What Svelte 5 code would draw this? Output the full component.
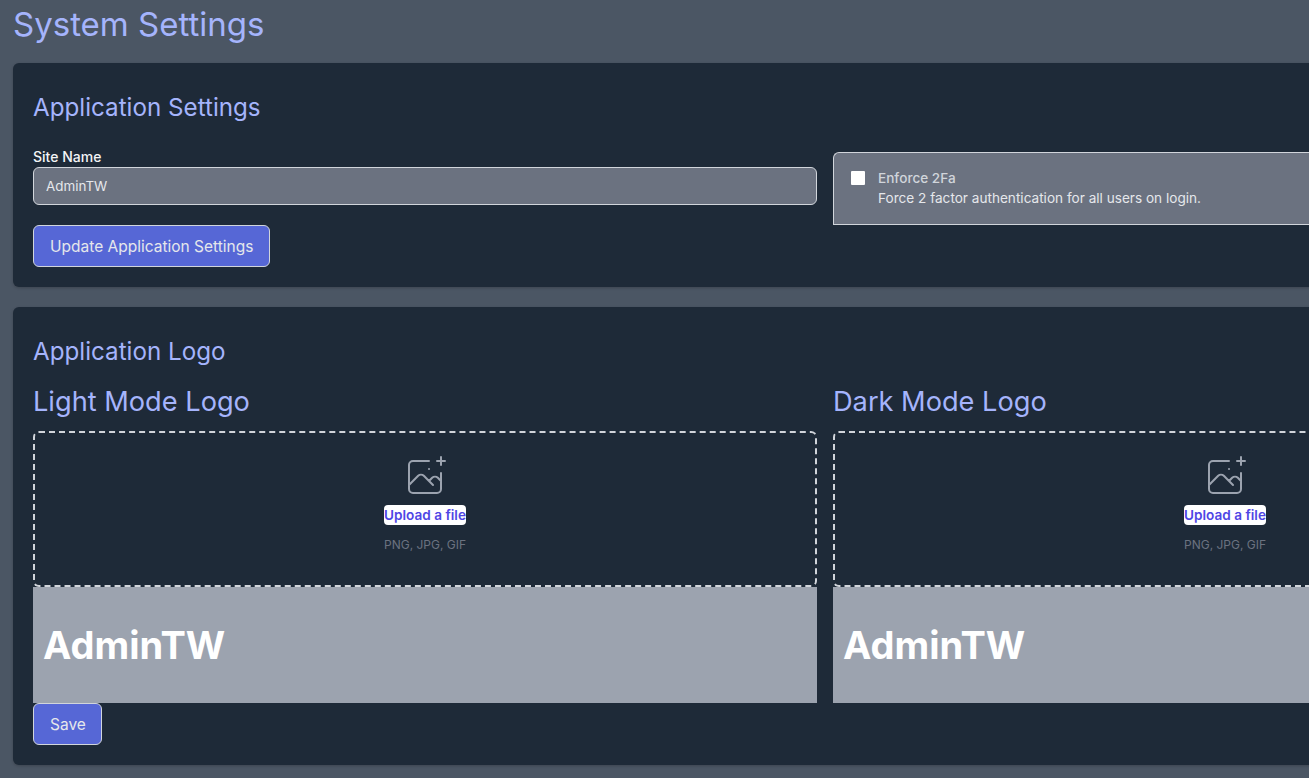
<script>
  const logos = [
    { title: 'Light Mode Logo', id: 'light' },
    { title: 'Dark Mode Logo', id: 'dark' }
  ];
</script>

<div class="page">
  <h1>System Settings</h1>

  <section class="card">
    <h2>Application Settings</h2>
    <div class="cols">
      <div class="field">
        <label for="site">Site Name</label>
        <input id="site" value="AdminTW" />
        <button class="btn">Update Application Settings</button>
      </div>
      <div class="enforce">
        <span class="check"></span>
        <div class="enforce-text">
          <div class="enforce-title">Enforce 2Fa</div>
          <div>Force 2 factor authentication for all users on login.</div>
        </div>
      </div>
    </div>
  </section>

  <section class="card">
    <h2 class="logo-h">Application Logo</h2>
    <div class="cols">
      {#each logos as l (l.id)}
        <div>
          <h3>{l.title}</h3>
          <div class="drop">
            <svg viewBox="0 0 48 48" width="48" height="48" fill="none" stroke="currentColor" stroke-width="2" stroke-linecap="round" stroke-linejoin="round">
              <path d="M28 8H12a4 4 0 00-4 4v20m32-12v8m0 0v8a4 4 0 01-4 4H12a4 4 0 01-4-4v-4m32-4l-3.172-3.172a4 4 0 00-5.656 0L28 28M8 32l9.172-9.172a4 4 0 015.656 0L28 28m0 0l4 4m4-24h8m-4-4v8m-12 4h.02" />
            </svg>
            <span class="upload">Upload a file</span>
            <span class="types">PNG, JPG, GIF</span>
          </div>
          <div class="preview">AdminTW</div>
        </div>
      {/each}
    </div>
    <button class="btn save">Save</button>
  </section>
</div>

<style>
  :global(html), :global(body) {
    margin: 0;
    height: 100%;
    overflow: hidden;
    background: #4b5664;
  }
  .page {
    width: 1624px;
    margin-left: 13px;
    font-family: Inter, "Liberation Sans", sans-serif;
    color: #fff;
  }
  h1 {
    margin: 0;
    padding-top: 6px;
    height: 63px;
    box-sizing: border-box;
    font-size: 33px;
    line-height: 36px;
    font-weight: 400;
    color: #a5b4fc;
  }
  .card {
    background: #1e2a38;
    border-radius: 6px;
    padding: 29px 20px 20px;
    margin-bottom: 20px;
    box-shadow: 0 1px 3px rgba(0, 0, 0, 0.2);
  }
  h2 {
    margin: 0 0 23px;
    font-size: 24.2px;
    line-height: 32px;
    font-weight: 400;
    color: #a5b4fc;
  }
  .logo-h { margin-bottom: 14px; }
  .cols {
    display: grid;
    grid-template-columns: 784px 784px;
    column-gap: 16px;
    align-items: start;
  }
  label {
    display: block;
    font-size: 14px;
    line-height: 20px;
    font-weight: 500;
    color: #f3f4f6;
  }
  input {
    display: block;
    box-sizing: border-box;
    width: 100%;
    height: 38px;
    padding: 0 12px;
    background: #6b7280;
    border: 1px solid #d1d5db;
    border-radius: 6px;
    color: #e5e7eb;
    font: 400 13.4px Inter, sans-serif;
    outline: none;
  }
  .btn {
    display: block;
    box-sizing: border-box;
    height: 42px;
    padding: 0 16px;
    background: #5667d6;
    border: 1px solid #d1d5db;
    border-radius: 6px;
    color: #e5e7eb;
    font: 400 15.5px Inter, sans-serif;
  }
  .field .btn { margin-top: 20px; }
  .enforce {
    display: flex;
    gap: 13px;
    box-sizing: border-box;
    height: 73px;
    margin-top: 5px;
    padding: 12px 17px;
    background: #6b7280;
    border: 1px solid #d1d5db;
    border-right: 0;
    border-radius: 6px 6px 0 0;
    font-size: 13.6px;
    line-height: 20px;
    color: #d1d5db;
  }
  .check {
    flex: none;
    width: 14px;
    height: 14px;
    margin-top: 6px;
    background: #fff;
    border-radius: 1px;
  }
  .enforce-text { color: #e5e7eb; padding-top: 3px; }
  .enforce-title { font-weight: 500; color: #d1d5db; }
  h3 {
    margin: 0 0 9px;
    font-size: 27.2px;
    line-height: 40px;
    font-weight: 400;
    color: #a5b4fc;
  }
  .drop {
    display: flex;
    flex-direction: column;
    align-items: center;
    box-sizing: border-box;
    height: 156px;
    padding-top: 20px;
    border: 2px dashed #d1d5db;
    border-radius: 6px;
    color: #9ca3af;
  }
  .upload {
    margin-top: 4px;
    height: 20px;
    background: #fff;
    border-radius: 4px;
    font-size: 13.6px;
    line-height: 20px;
    font-weight: 600;
    color: #4f46e5;
  }
  .types {
    margin-top: 10px;
    font-size: 12px;
    line-height: 20px;
    color: #6b7280;
  }
  .preview {
    height: 116px;
    box-sizing: border-box;
    padding: 0 10px;
    background: #9ca3af;
    font-size: 38px;
    line-height: 116px;
    font-weight: 700;
    color: #fff;
  }
  .save { width: 69px; }
</style>
